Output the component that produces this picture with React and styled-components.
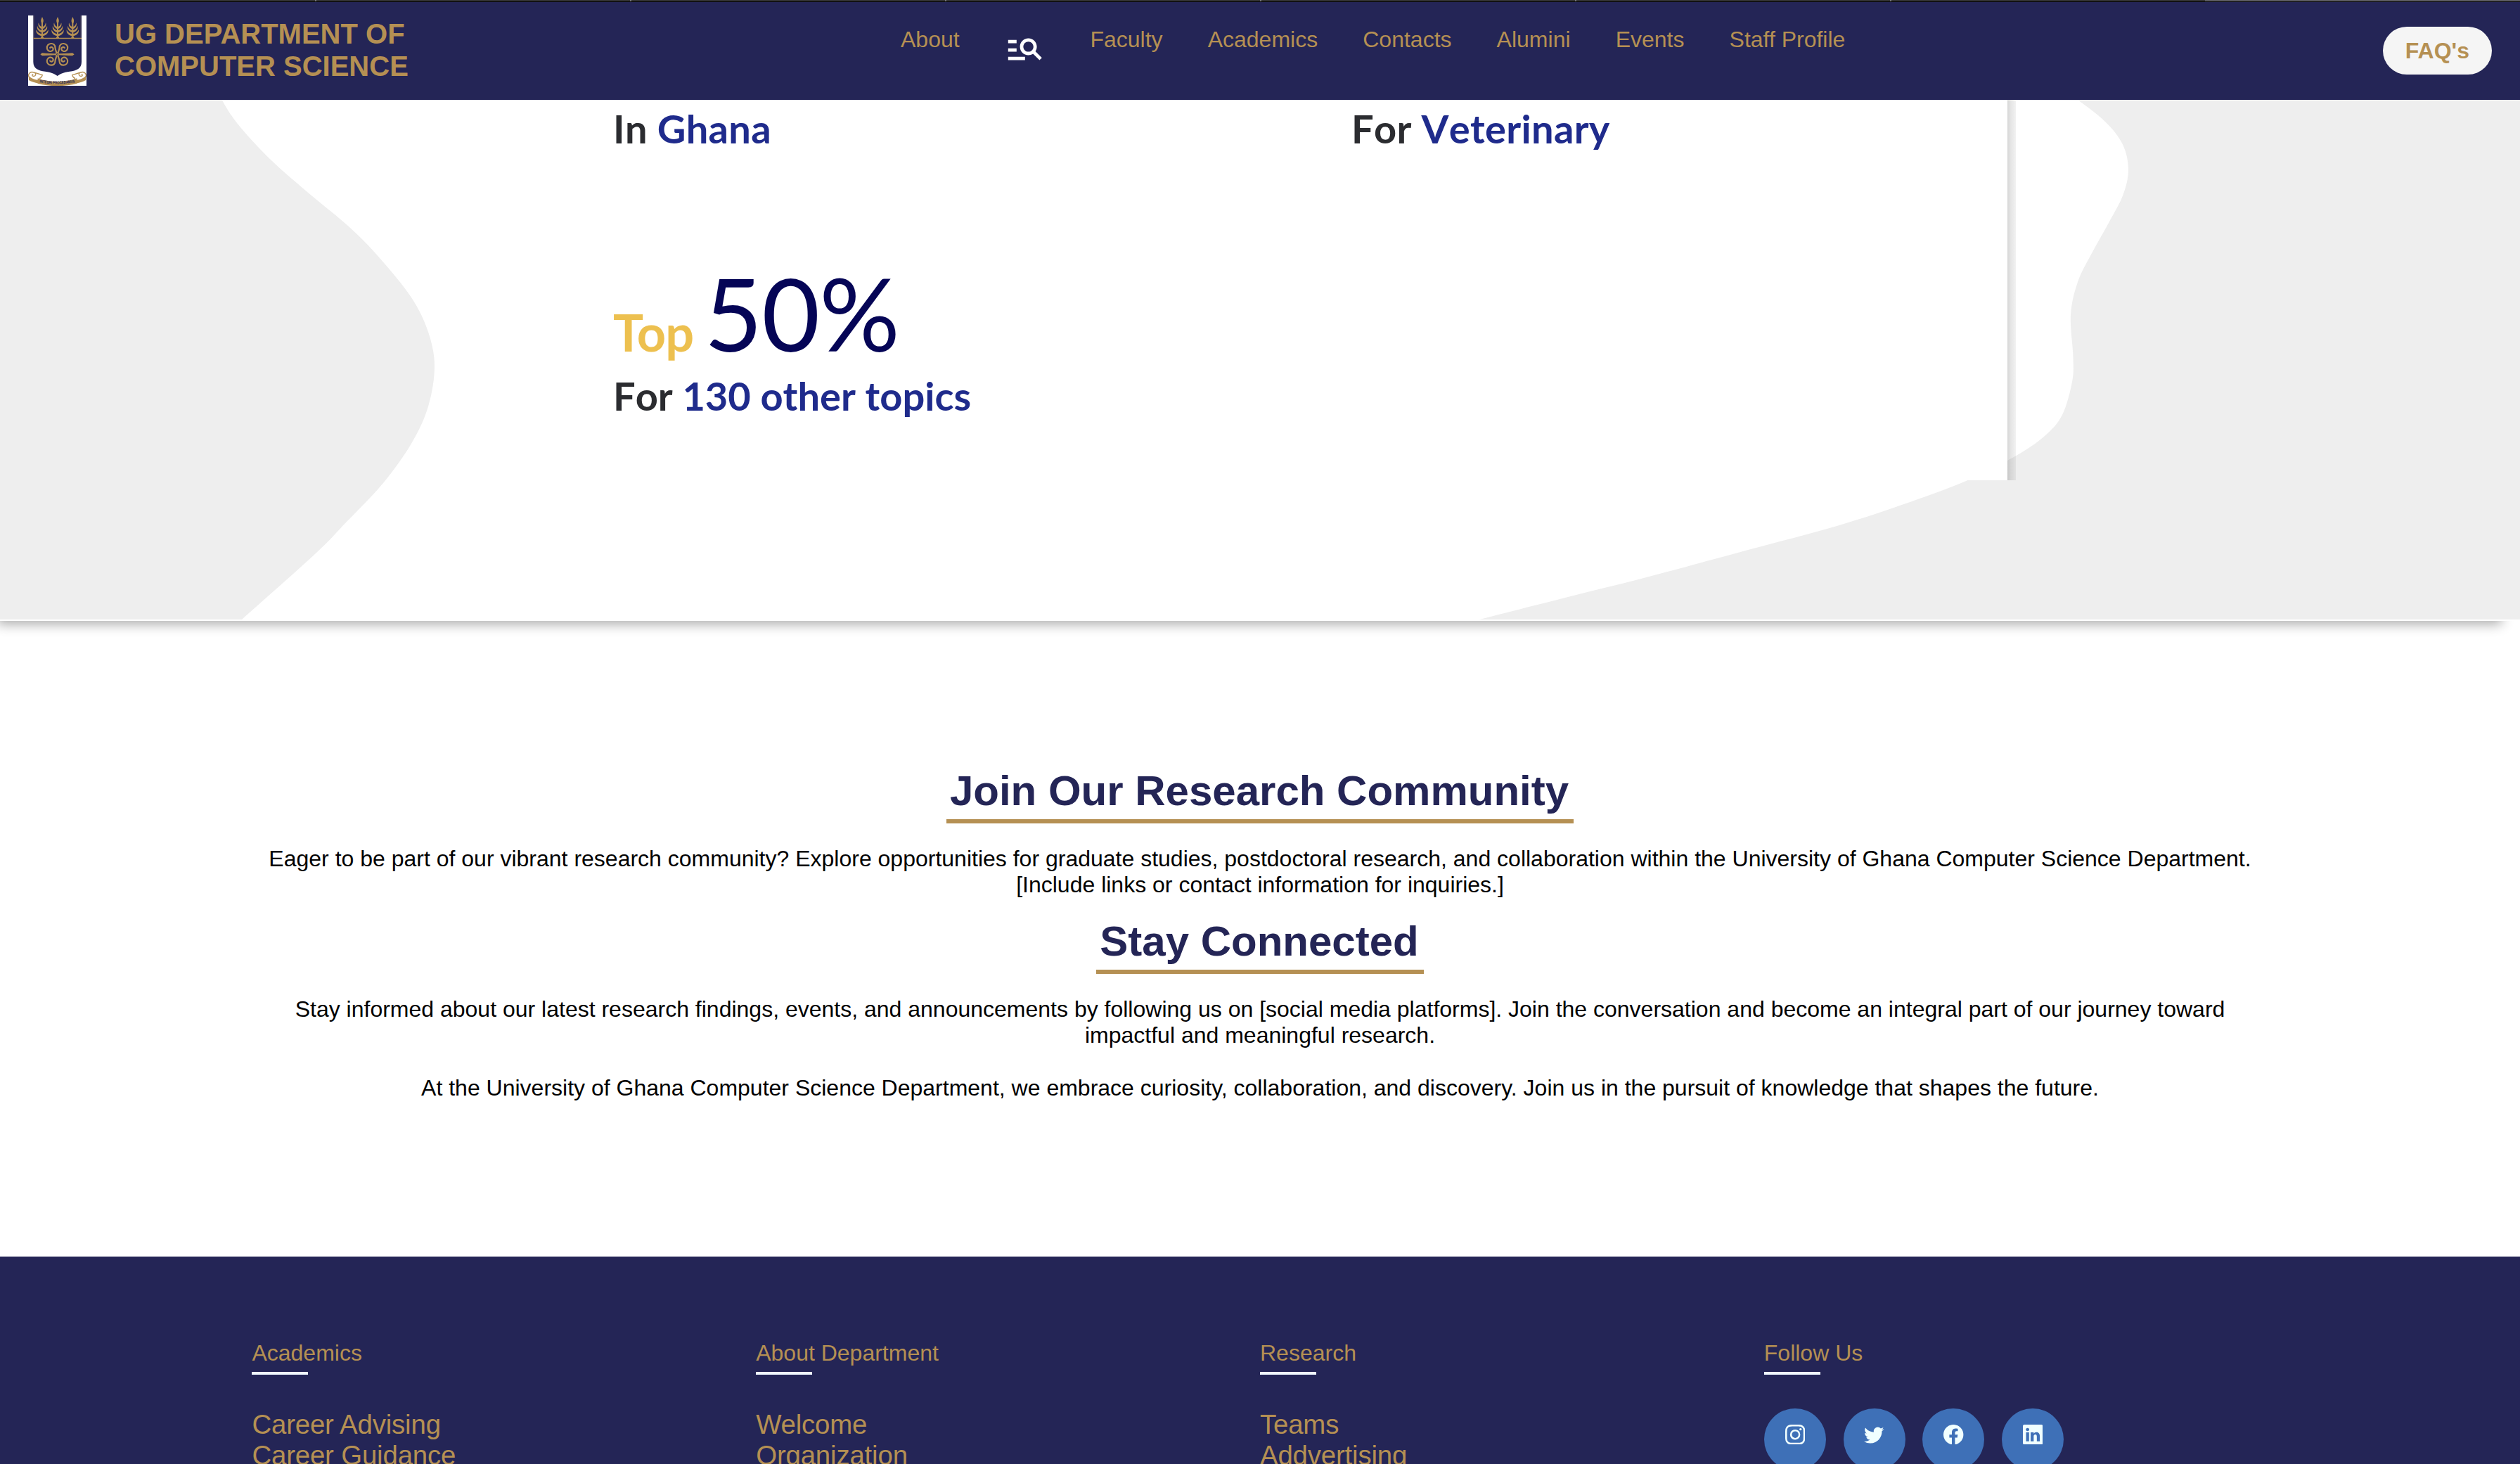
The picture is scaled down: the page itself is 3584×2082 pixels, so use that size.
import React from "react";
import styled, { createGlobalStyle } from "styled-components";
import { MdManageSearch } from "react-icons/md";
import { BsInstagram, BsTwitter, BsFacebook, BsLinkedin } from "react-icons/bs";

const navy = "#242556";
const gold = "#b59053";

const GlobalStyle = createGlobalStyle`
  *, *::before, *::after { box-sizing: border-box; }
  body { margin: 0; background: #fff; font-family: "Liberation Sans", Arial, sans-serif; }
  h1, h2, h3, p, ul { margin: 0; padding: 0; }
  a { color: inherit; text-decoration: none; }
`;

const Page = styled.div`
  display: flex;
  flex-direction: column;
  height: 2082px;
  overflow: hidden;
`;

const TabStrip = styled.div`
  display: grid;
  grid-template-columns: repeat(8, 1fr);
  flex: none;
  height: 3px;
  background: #343434;
  border-bottom: 1px solid #000;
`;

const Tab = styled.span`
  background: ${(p) => (p.$active ? "#5d5d62" : "transparent")};
  border-left: ${(p) => (p.$divided ? "2px solid #77777a" : "0")};
`;

const Header = styled.header`
  display: grid;
  grid-template-columns: 1281px 1fr auto;
  flex: none;
  height: 139px;
  padding-right: 40px;
  background: ${navy};
  color: ${gold};
`;

const Brand = styled.div`
  display: flex;
  align-items: flex-start;
  gap: 40px;
  padding: 19px 0 0 40px;
`;

const Crest = styled.svg`
  display: block;
  width: 83px;
  height: 100px;
`;

const BrandName = styled.h1`
  padding-top: 3px;
  font-size: 40px;
  line-height: 46px;
  font-weight: 700;
`;

const Nav = styled.nav`
  display: flex;
  align-items: flex-start;
  gap: 64.1px;
  padding-top: 34.5px;
  font-size: 32px;
  line-height: 37px;
`;

const SearchIcon = styled(MdManageSearch)`
  width: 57.6px;
  height: 57.6px;
  margin-top: 2.5px;
  color: #fff;
`;

const FaqButton = styled.button`
  align-self: start;
  height: 68px;
  margin-top: 35px;
  padding: 0 32px;
  border: 0;
  border-radius: 34px;
  background: #f5f5f5;
  color: ${gold};
  font: 700 32px "Liberation Sans", Arial, sans-serif;
`;

const Hero = styled.section`
  position: relative;
  flex: none;
  height: 741px;
  background: #eeeeee;
  border-bottom: 2px solid #fff;
  box-shadow: -15px 16px 16px -11px rgba(0, 0, 0, 0.32);
`;

const Backdrop = styled.svg`
  position: absolute;
  inset: 0;
  width: 100%;
  height: 739px;
`;

const RankPanel = styled.div`
  position: relative;
  display: grid;
  grid-template-columns: 1050px 1fr;
  align-content: start;
  width: 2148px;
  height: 541px;
  margin-left: 719px;
  padding-left: 153px;
  font-family: Lato, sans-serif;
  color: #2b2c30;
  background: linear-gradient(90deg, transparent 2136px, rgba(0, 0, 0, 0.16) 2136px, rgba(0, 0, 0, 0.1) 2141px, rgba(0, 0, 0, 0.05));

  &::before {
    content: "";
    position: absolute;
    inset: 0 12px 0 0;
    background: linear-gradient(90deg, transparent 1600px, #fff 1600px);
  }
`;

const Rank = styled.div`
  position: relative;
  display: flex;
  flex-direction: column;
  gap: 21px;
  padding-top: ${(p) => p.$top}px;
`;

const RankScore = styled.div`
  display: flex;
  align-items: baseline;
  gap: 15px;
  height: 130px;
  font-size: 143px;
  line-height: 130px;
  letter-spacing: -1px;
  color: #050556;
`;

const RankTop = styled.span`
  font-size: 72px;
  line-height: 80px;
  font-weight: 700;
  letter-spacing: -0.8px;
  color: #edc04f;
`;

const RankLabel = styled.div`
  font-size: 56px;
  line-height: 64px;
  font-weight: 700;
  font-kerning: none;
  letter-spacing: ${(p) => p.$tracking || 0}px;
  white-space: nowrap;
  span { color: #1f2b8c; }
`;

const Community = styled.main`
  display: flex;
  flex-direction: column;
  align-items: center;
  flex: none;
  height: 904px;
  padding: 206.5px 358.4px 0;
`;

const SectionTitle = styled.h2`
  margin-top: ${(p) => p.$top || 0}px;
  padding: 0 7px 6.5px 5px;
  border-bottom: 6px solid ${gold};
  color: ${navy};
  font-size: 60px;
  line-height: 69px;
  font-weight: 700;
`;

const Paragraph = styled.p`
  margin-top: ${(p) => p.$top}px;
  color: #000;
  font-size: 32px;
  line-height: 36.8px;
  text-align: center;
`;

const Footer = styled.footer`
  display: grid;
  grid-template-columns: repeat(4, 716.8px);
  align-content: start;
  flex: 1;
  padding: 118.5px 0 0 358.4px;
  background: ${navy};
  color: ${gold};
`;

const ColumnTitle = styled.h3`
  font-size: 32px;
  line-height: 37px;
  font-weight: 400;

  &::after {
    content: "";
    display: block;
    width: 80px;
    height: 4px;
    margin-top: 8.5px;
    background: #f0f8ff;
  }
`;

const LinkList = styled.ul`
  margin-top: 49px;
  list-style: none;
  font-size: 38.4px;
  line-height: 44px;
  letter-spacing: -0.17px;
`;

const Socials = styled.div`
  display: flex;
  gap: 24.8px;
  margin-top: 48px;
`;

const SocialLink = styled.a`
  display: flex;
  justify-content: center;
  width: 88px;
  height: 88px;
  padding-top: 23px;
  border-radius: 50%;
  background: #3e70b7;
  color: #f0ffff;
  svg { width: 28.4px; height: 28.4px; }
`;

function Tree({ x }) {
  return (
    <g transform={`translate(${x} 6)`} fill={gold}>
      <path d="M0 0C4 8 6 14 5 19L3 27H-3L-5 19C-6 14-4 8 0 0Z" />
      <path d="M-3 20H3V92H-3Z" />
      <path d="M0 43C8 41 14 35 15 25C18 31 17 39 12 44C9 48 4 51 0 52C-4 51-9 48-12 44C-17 39-18 31-15 25C-14 35-8 41 0 43Z" />
      <path d="M0 58C10 56 18 49 21 38C23 46 21 54 15 59C11 63 5 66 0 67C-5 66-11 63-15 59C-21 54-23 46-21 38C-18 49-10 56 0 58Z" />
      <path d="M0 73C11 72 21 65 26 55C27 64 24 71 17 76C12 80 5 82 0 82C-5 82-12 80-17 76C-24 71-27 64-26 55C-21 65-11 72 0 73Z" />
      <path d="M-5 84H5L7 93H-7Z" />
    </g>
  );
}

function Curl({ flip }) {
  return (
    <path
      transform={`translate(124.5 166) scale(${flip})`}
      d="M2 -4C5 -14 9 -21 9 -29C9 -40 17 -47 27 -46C38 -45 45 -37 44 -27C43 -18 36 -12 28 -13C20 -14 16 -20 18 -26C20 -31 27 -33 31 -28"
      fill="none"
      stroke={gold}
      strokeWidth="6.5"
      strokeLinecap="round"
    />
  );
}

function UniversityCrest() {
  return (
    <Crest viewBox="0 0 249 300" preserveAspectRatio="none">
      <rect width="249" height="300" fill="#fff" />
      <path d="M22 0H228V198C228 226 207 236 177 239C151 242 137 249 125 258C113 249 99 242 73 239C43 236 22 226 22 198Z" fill={navy} />
      <path d="M25 0V95M225 0V95" stroke={gold} strokeWidth="1.5" opacity=".5" />
      <path d="M22 97.5H228" stroke={gold} strokeWidth="5" />
      <Tree x={60} />
      <Tree x={126} />
      <Tree x={190} />
      <Curl flip="1 1" />
      <Curl flip="-1 1" />
      <Curl flip="1 -1" />
      <Curl flip="-1 -1" />
      <path d="M52 166L60 160L75 161L116 163L124 157L133 163L174 161L189 160L197 166L189 172L174 171L133 169L124 175L116 169L75 171L60 172Z" fill={gold} />
      <circle cx="124.5" cy="166" r="4" fill={navy} />
      <circle cx="124.5" cy="166" r="2" fill={gold} />
      <g fill={gold}>
        <path d="M2 257C18 272 32 274 45 275V290C28 286 14 283 3 276Z" />
        <path d="M247 257C231 272 217 274 204 275V290C221 286 235 283 246 276Z" />
        <path d="M41 268C66 278 95 282 124 282C154 282 183 278 208 268V290C184 297 155 300 124 300C94 300 65 297 41 290Z" />
      </g>
      <g fill="none" stroke={gold} strokeWidth="4">
        <path d="M3 262C-2 247 11 238 25 243C37 248 33 260 23 259C15 258 16 251 22 251M25 243L61 254C59 261 54 267 48 269" />
        <path d="M246 262C251 247 238 238 224 243C212 248 216 260 226 259C234 258 233 251 227 251M224 243L188 254C190 261 195 267 201 269" />
      </g>
      <path id="motto" d="M49 286Q124 299 204 285" fill="none" />
      <text fontFamily="Liberation Sans, Arial, sans-serif" fontSize="17" fontWeight="700" fill={navy}>
        <textPath href="#motto" textLength="152" lengthAdjust="spacingAndGlyphs">INTEGRI PROCEDAMUS</textPath>
      </text>
    </Crest>
  );
}

const leftEdge = [
  [299, 100], [315.7, 142], [342, 181], [387, 229], [443, 278], [497, 323], [540, 367],
  [585, 423], [609, 472], [618, 521], [609, 578], [585.5, 630], [545, 687],
  [493, 742], [450, 786], [344, 881], [320, 902],
];

const rightEdge = [
  [2030, 900], [2104, 881], [2226, 850], [2343.5, 820.5], [2490, 781], [2612.5, 748],
  [2715, 714.5], [2798.5, 683], [2867, 648.3], [2908, 620], [2933, 590],
  [2947, 543], [2948.5, 508], [2945, 448], [2955, 401], [2974.5, 361],
  [2999, 317], [3019.5, 277], [3027, 240.4], [3018.5, 204.6], [2994, 173],
  [2955, 142], [2920, 118],
];

// Catmull-Rom spline through the inner points; the outer two only set the end tangents.
function spline(points) {
  let d = "";
  for (let i = 1; i < points.length - 2; i++) {
    const [a, b, c, e] = points.slice(i - 1, i + 3);
    d += `C${b[0] + (c[0] - a[0]) / 6} ${b[1] + (c[1] - a[1]) / 6} ${c[0] - (e[0] - b[0]) / 6} ${c[1] - (e[1] - b[1]) / 6} ${c[0]} ${c[1]}`;
  }
  return d;
}

const blobPath = `M315.7 142${spline(leftEdge)}H2104${spline(rightEdge)}Z`;

const footerColumns = [
  { title: "Academics", links: ["Career Advising", "Career Guidance"] },
  { title: "About Department", links: ["Welcome", "Organization"] },
  { title: "Research", links: ["Teams", "Addvertising"] },
];

const pages = ["Faculty", "Academics", "Contacts", "Alumini", "Events", "Staff Profile"];
const socials = [BsInstagram, BsTwitter, BsFacebook, BsLinkedin];

export default function App() {
  return (
    <Page>
      <GlobalStyle />
      <TabStrip>
        {[0, 1, 2, 3, 4, 5, 6, 7].map((i) => (
          <Tab key={i} $active={i === 7} $divided={i > 0 && i < 7} />
        ))}
      </TabStrip>
      <Header>
        <Brand>
          <UniversityCrest />
          <BrandName>
            UG DEPARTMENT OF
            <br />
            COMPUTER SCIENCE
          </BrandName>
        </Brand>
        <Nav>
          <a href="#about">About</a>
          <SearchIcon />
          {pages.map((name) => (
            <a href="#page" key={name}>{name}</a>
          ))}
        </Nav>
        <FaqButton>FAQ's</FaqButton>
      </Header>
      <Hero>
        <Backdrop viewBox="0 142 3584 739" preserveAspectRatio="none">
          <path fill="#fff" d={blobPath} />
        </Backdrop>
        <RankPanel>
          <Rank $top={9}>
            <RankLabel $tracking={0.3}>In <span>Ghana</span></RankLabel>
          </Rank>
          <Rank $top={9}>
            <RankLabel $tracking={0.3}>For <span>Veterinary</span></RankLabel>
          </Rank>
          <Rank $top={165}>
            <RankScore>
              <RankTop>Top</RankTop>50%
            </RankScore>
            <RankLabel>For <span>130 other topics</span></RankLabel>
          </Rank>
        </RankPanel>
      </Hero>
      <Community>
        <SectionTitle>Join Our Research Community</SectionTitle>
        <Paragraph $top={32}>
          Eager to be part of our vibrant research community? Explore opportunities for graduate studies, postdoctoral research, and collaboration within the University of Ghana Computer Science Department. [Include links or contact information for inquiries.]
        </Paragraph>
        <SectionTitle $top={27}>Stay Connected</SectionTitle>
        <Paragraph $top={32}>
          Stay informed about our latest research findings, events, and announcements by following us on [social media platforms]. Join the conversation and become an integral part of our journey toward impactful and meaningful research.
        </Paragraph>
        <Paragraph $top={38}>
          At the University of Ghana Computer Science Department, we embrace curiosity, collaboration, and discovery. Join us in the pursuit of knowledge that shapes the future.
        </Paragraph>
      </Community>
      <Footer>
        {footerColumns.map((col) => (
          <div key={col.title}>
            <ColumnTitle>{col.title}</ColumnTitle>
            <LinkList>
              {col.links.map((link) => (
                <li key={link}><a href="#link">{link}</a></li>
              ))}
            </LinkList>
          </div>
        ))}
        <div>
          <ColumnTitle>Follow Us</ColumnTitle>
          <Socials>
            {socials.map((Icon, i) => (
              <SocialLink href="#social" key={i}><Icon /></SocialLink>
            ))}
          </Socials>
        </div>
      </Footer>
    </Page>
  );
}
